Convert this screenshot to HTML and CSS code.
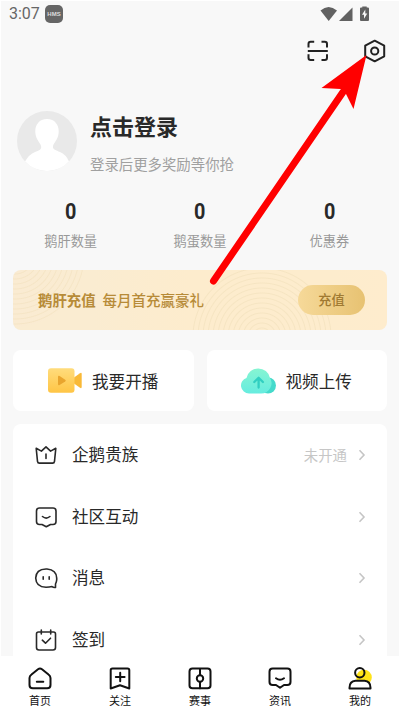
FILE: index.html
```html
<!DOCTYPE html>
<html lang="zh-CN">
<head>
<meta charset="utf-8">
<title>我的</title>
<link rel="stylesheet" href="styles.css">
</head>
<body>
<div class="screen">
  <header class="status">
    <span class="time">3:07</span>
    <span class="hms">HMS</span>
    <svg class="signals" width="52" height="18" viewBox="320 4 52 18">
      <g fill="#616161">
        <path d="M320.5 9.5Q328.5 2.5 337 9.5L328.7 20Z"/>
        <path d="M339 20L352.5 6.5V20Z"/>
        <path d="M362.3 6.5v-1h4.4v1h1.3q1 0 1 1V19q0 1-1 1h-7q-1 0-1-1V7.500q0-1 1-1z"/>
      </g>
      <path fill="#f8f8f8" d="M365.300 8.500L362 13.800h2v4l3.300-5.300h-2z"/>
    </svg>
  </header>

  <div class="tools">
    <svg width="22" height="22" viewBox="307 40 22 22" fill="none" stroke="#222" stroke-width="2">
      <path d="M308.500 47.500V44q0-2.200 2.200-2.200h3.500M321.500 41.800h3.300q2.200 0 2.200 2.200v3.500M308.500 54.300v3.500q0 2.200 2.200 2.200h3.500M321.500 60h3.300q2.200 0 2.200-2.200v-3.500M307.800 51h20"/>
    </svg>
    <svg width="24" height="26" viewBox="363 38 24 26" fill="none" stroke="#222" stroke-width="2">
      <path stroke-linejoin="round" d="M374.700 40.700L384.200 45.700V56.300L374.700 61.300L365.200 56.300V45.700Z"/>
      <circle cx="374.700" cy="51" r="3.600"/>
    </svg>
  </div>

  <section class="profile">
    <svg class="avatar" width="60" height="60" viewBox="0 0 60 60">
      <circle cx="30" cy="30" r="30" fill="#e9e9e9"/>
      <path fill="#fff" d="M30 8C38 8 42 14 41.700 21C41.500 27 38.500 30 36.500 33.500C34.500 38 38 39 43 41Q49 43.500 52 50.400A30 30 0 0 1 8 50.400Q12 43.500 18 41C23 39 25.500 38 23.500 33.500C21.500 30 18.500 27 18.300 21C18 14 22 8 30 8Z"/>
    </svg>
    <div class="who">
      <h1>点击登录</h1>
      <p>登录后更多奖励等你抢</p>
    </div>
  </section>

  <section class="stats">
    <div><b>0</b><span>鹅肝数量</span></div>
    <div><b>0</b><span>鹅蛋数量</span></div>
    <div><b>0</b><span>优惠券</span></div>
  </section>

  <section class="banner">
    <strong>鹅肝充值</strong>
    <span class="offer">每月首充赢豪礼</span>
    <span class="charge">充值</span>
  </section>

  <section class="actions">
    <div class="action">
      <svg width="34" height="26" viewBox="48 368 34 26">
        <defs><linearGradient id="gold" x2="0" y2="1"><stop stop-color="#ffdc7c"/><stop offset="1" stop-color="#ffc545"/></linearGradient></defs>
        <path fill="#f9b937" d="M74 377.500l6-4.300q1.700-1 1.700.8v13q0 1.800-1.700.8l-6-4.300z"/>
        <rect x="48" y="368.300" width="26.500" height="24.500" rx="3" fill="url(#gold)"/>
        <path fill="#e9a52e" d="M58 377q0-1.800 1.600-1l5.600 3.700q1.200.9 0 1.700l-5.600 3.500q-1.600.8-1.600-1z"/>
      </svg>
      <span>我要开播</span>
    </div>
    <div class="action upload">
      <svg width="36" height="26" viewBox="241 367.500 36 26">
        <defs><linearGradient id="mint" x2="0" y2="1"><stop stop-color="#86f5d2"/><stop offset="1" stop-color="#66ecdf"/></linearGradient></defs>
        <circle cx="268" cy="385" r="8" fill="#45dacb"/>
        <path fill="url(#mint)" d="M249 393a8 8 0 0 1-2.500-15.600A12 12 0 0 1 270 377.500Q273 382 270.500 387Q267.500 393 261 393Z"/>
        <path fill="none" stroke="#31cfc1" stroke-width="2.300" stroke-linecap="round" stroke-linejoin="round" d="M258.600 387v-9M254.300 381.500l4.300-4.200 4.300 4.200"/>
      </svg>
      <span>视频上传</span>
    </div>
  </section>

  <main class="menu">
    <div class="row">
      <svg class="icon" viewBox="34 443 24 24"><path d="M36.200 448.300l5.200 2.800 4.600-4.300 4.600 4.300 5.200-2.800-1.300 13q-.2 1.800-2 1.800h-13q-1.800 0-2-1.800zM46 454v4.500"/></svg>
      <span>企鹅贵族</span><em>未开通</em>
      <svg class="chevron" viewBox="0 0 8 12"><path d="M1.500 1.300L6 6l-4.500 4.700"/></svg>
    </div>
    <div class="row">
      <svg class="icon" viewBox="34 505.500 24 24"><path d="M39.500 508.500h13.500q3 0 3 3V522q0 3-3 3h-2.500l-4.200 2.300-4.300-2.300h-2.500q-3 0-3-3v-10.500q0-3 3-3zM42.500 517q3.700 3.200 7.400 0"/></svg>
      <span>社区互动</span>
      <svg class="chevron" viewBox="0 0 8 12"><path d="M1.500 1.300L6 6l-4.500 4.700"/></svg>
    </div>
    <div class="row">
      <svg class="icon" viewBox="34 567 24 24"><path d="M46 570h1q9.500 1 9.700 9v2q-.2 2-1.200 4v3.500q-2 .3-3.500-.9-2.500.7-6 .7-10-.3-10.300-9.300Q36 570.300 46 570zM43.200 577.700v2.500M49.200 577.700v2.500"/></svg>
      <span>消息</span>
      <svg class="chevron" viewBox="0 0 8 12"><path d="M1.500 1.300L6 6l-4.500 4.700"/></svg>
    </div>
    <div class="row">
      <svg class="icon" viewBox="34 628.500 24 24"><path d="M38.500 632.500h15q2 0 2 2V648q0 2.500-2.500 2.500H39q-2.500 0-2.500-2.500v-13.500q0-2 2-2zM41.300 630.500v4M50.700 630.500v4M42.300 640.700l3.200 3 5-5"/></svg>
      <span>签到</span>
      <svg class="chevron" viewBox="0 0 8 12"><path d="M1.500 1.300L6 6l-4.500 4.700"/></svg>
    </div>
  </main>

  <nav class="tabs">
    <div class="tab">
      <svg viewBox="28 666 24 24"><path d="M31.500 674.500l6.500-5.200q2-1.500 4 0l6.500 5.200q2 1.500 2 3.500v7q0 3.300-3.300 3.300H32.800q-3.300 0-3.300-3.300v-7q0-2 2-3.500zM36.800 681.700h6.500"/></svg>
      <span>首页</span>
    </div>
    <div class="tab">
      <svg viewBox="108 666 24 24"><path d="M112.500 668.500h15q1.800 0 1.800 1.800v18.200l-9.300-3.200-9.300 3.200v-18.200q0-1.800 1.800-1.800zM115.800 677h8.800M120.200 672.700v8.600"/></svg>
      <span>关注</span>
    </div>
    <div class="tab">
      <svg viewBox="188 666 24 24"><path d="M192.500 668.500h15q3 0 3 3v14q0 2.800-3 2.800h-15q-3 0-3-2.800v-14q0-3 3-3zM200 668.500v6.500M200 682v6.500"/><circle cx="200" cy="678.500" r="3.200"/></svg>
      <span>赛事</span>
    </div>
    <div class="tab">
      <svg viewBox="268 666 24 24"><path d="M272.700 668.500h14.600q3.200 0 3.200 3.200V682q0 3-3.200 3h-3.300l-4 2.800-4-2.800h-3.300q-3.200 0-3.200-3v-10.300q0-3.200 3.200-3.200zM276 678.300q4 2.800 8 0"/></svg>
      <span>资讯</span>
    </div>
    <div class="tab">
      <svg viewBox="348 666 24 24"><circle class="sun" cx="364" cy="677.500" r="7.800"/><circle cx="359.800" cy="672.800" r="4.700"/><path class="torso" d="M355.500 680.800h9q6 .5 6 7v.8h-21v-.8q0-6.500 6-7z"/></svg>
      <span>我的</span>
    </div>
  </nav>

  <svg class="pointer" width="400" height="300" viewBox="0 0 400 300">
    <path d="M213.500 281L343 92" stroke="#f00" stroke-width="7" stroke-linecap="round"/>
    <path fill="#f00" d="M366.500 55L321.500 88L340.500 89L345 92L353.500 109Z"/>
  </svg>
</div>
</body>
</html>
```
FILE: styles.css
```css
* { box-sizing: border-box; }
body { margin: 0; font-family: "Noto Sans CJK SC", sans-serif; color: #292929; }
h1, p { margin: 0; }
svg { display: block; flex: none; }

.screen {
  position: relative;
  display: flex;
  flex-direction: column;
  width: 400px;
  height: 711px;
  overflow: hidden;
  background: #f8f8f8;
  border: 1px solid #fff;
  border-bottom: 0;
}
.screen > * { flex: none; }

.status { display: flex; align-items: center; height: 25px; padding: 0 27px 0 8px; }
.time { width: 36px; font: 16px/24px Roboto, sans-serif; color: #666; }
.hms {
  width: 18px; height: 18px; border-radius: 5px;
  background: #666; color: #ddd;
  font: bold 6px/18px "Liberation Sans", sans-serif;
  text-align: center;
}
.signals { margin-left: auto; }

.tools { display: flex; justify-content: flex-end; align-items: center; gap: 34px; height: 50px; padding-right: 12px; }

.profile { display: flex; height: 109px; padding: 35px 0 0 16px; gap: 13px; }
.who h1 { font-size: 22px; line-height: 28px; font-weight: 700; }
.who p { margin-top: 14px; font-size: 14.400px; line-height: 22px; color: #a0a0a0; }

.stats { display: grid; grid-template-columns: repeat(3, 1fr); height: 85px; padding: 15px 5px 0; text-align: center; }
.stats b { display: block; font: bold 22px/24px "Roboto", sans-serif; transform: scaleX(.9); }
.stats span { display: block; margin-top: 7px; font-size: 13.200px; line-height: 20px; color: #999; }

.banner {
  display: flex;
  align-items: center;
  height: 60px;
  margin: 0 12px;
  padding: 0 22px 0 25px;
  border-radius: 8px;
  color: #b78b38;
  background:
    radial-gradient(circle at 2px -15px, transparent 71px, #faecd1 72px) 0 0 / 80px 60px no-repeat,
    repeating-radial-gradient(circle at 2px -15px, transparent 0 3px, #eddab260 4px, transparent 5px) 0 0 / 80px 60px no-repeat,
    radial-gradient(circle at 72px 67px, transparent 71px, #fdeccd 72px) 177px 0 / 144px 60px no-repeat,
    repeating-radial-gradient(circle at 72px 67px, transparent 0 3px, #ecdbb470 4px, transparent 5px) 177px 0 / 144px 60px no-repeat,
    linear-gradient(90deg, #faebd2, #faecd1 80px, #fdeccd 177px, #fdeccd 320px, #feeccd);
}
.banner strong, .offer { position: relative; top: -1px; }
.banner strong { font-size: 14.400px; font-weight: 700; }
.offer { margin-left: 7px; font-size: 14.500px; font-weight: 500; }
.charge {
  width: 67px; height: 30px; margin-left: auto;
  border-radius: 15px;
  background: linear-gradient(90deg, #f6d999, #e7c272);
  color: #a07a32;
  font-size: 13.200px; line-height: 30px; font-weight: 500;
  text-align: center;
}

.actions { display: grid; grid-template-columns: 1fr 1fr; gap: 13px; margin: 20px 12px 13px; }
.action { display: flex; align-items: center; gap: 10px; height: 61px; padding-left: 35px; border-radius: 8px; background: #fff; font-size: 16.600px; }
.upload { padding-left: 34px; gap: 9px; }

.screen > .menu { flex: 1 1 0; min-height: 0; overflow: hidden; margin: 0 12px; padding: 0 21px; border-radius: 8px 8px 0 0; background: #fff; }
.row { display: flex; align-items: center; height: 61.700px; font-size: 16.600px; }
.row span { margin-left: 14px; position: relative; top: -1px; }
.row em { margin-left: auto; margin-right: 11px; font-size: 14.400px; font-style: normal; color: #c6c6c6; }
.icon { width: 24px; height: 24px; fill: none; stroke: #292929; stroke-width: 1.600; stroke-linecap: round; stroke-linejoin: round; }
.chevron { width: 8px; height: 12px; margin-left: auto; fill: none; stroke: #c5c5c5; stroke-width: 1.600; }
.row em + .chevron { margin-left: 0; }

.tabs { display: grid; grid-template-columns: repeat(5, 80px); height: 55px; margin: 0 -1px; padding-top: 10px; background: #fff; z-index: 1; }
.tab { display: flex; flex-direction: column; align-items: center; color: #111; font-size: 11px; line-height: 20px; }
.tab svg { width: 24px; height: 24px; fill: none; stroke: #111; stroke-width: 2; stroke-linecap: round; stroke-linejoin: round; }
.tab .sun { fill: #ffe318; stroke: none; }
.tab .torso { fill: #fff; }

.pointer { position: absolute; left: -1px; top: -1px; z-index: 2; fill: none; }
```
